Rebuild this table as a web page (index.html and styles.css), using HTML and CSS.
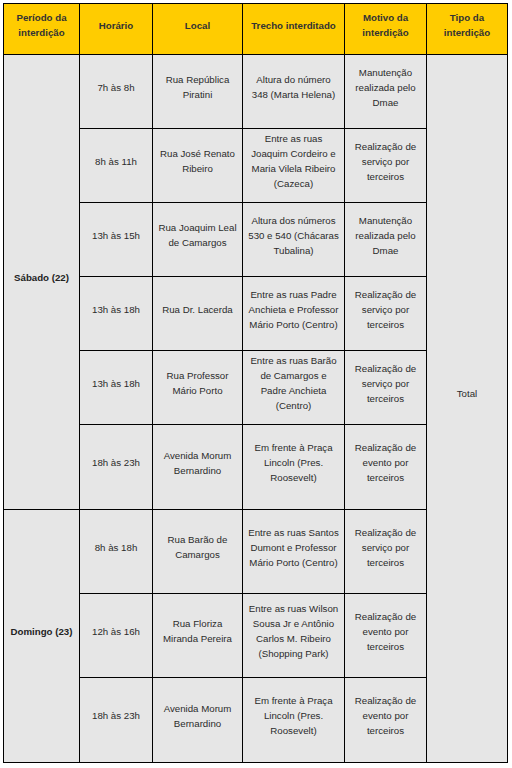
FILE: index.html
```html
<!DOCTYPE html>
<html lang="pt-BR">
<head>
<meta charset="utf-8">
<title>Interdições</title>
<link rel="stylesheet" href="styles.css">
</head>
<body>
<table class="schedule">
  <colgroup>
    <col class="c1"><col class="c2"><col class="c3"><col class="c4"><col class="c5"><col class="c6">
  </colgroup>
  <thead>
    <tr class="head">
      <th>Período da interdição</th>
      <th>Horário</th>
      <th>Local</th>
      <th>Trecho interditado</th>
      <th>Motivo da interdição</th>
      <th>Tipo da interdição</th>
    </tr>
  </thead>
  <tbody>
    <tr class="r74">
      <td class="day" rowspan="6">Sábado (22)</td>
      <td>7h às 8h</td>
      <td>Rua República Piratini</td>
      <td>Altura do número 348 (Marta Helena)</td>
      <td>Manutenção realizada pelo Dmae</td>
      <td class="total" rowspan="9">Total</td>
    </tr>
    <tr class="r74">
      <td>8h às 11h</td>
      <td>Rua José Renato Ribeiro</td>
      <td>Entre as ruas Joaquim Cordeiro e Maria Vilela Ribeiro (Cazeca)</td>
      <td>Realização de serviço por terceiros</td>
    </tr>
    <tr class="r74">
      <td>13h às 15h</td>
      <td>Rua Joaquim Leal de Camargos</td>
      <td>Altura dos números 530 e 540 (Chácaras Tubalina)</td>
      <td>Manutenção realizada pelo Dmae</td>
    </tr>
    <tr class="r74">
      <td>13h às 18h</td>
      <td>Rua Dr. Lacerda</td>
      <td>Entre as ruas Padre Anchieta e Professor Mário Porto (Centro)</td>
      <td>Realização de serviço por terceiros</td>
    </tr>
    <tr class="r74">
      <td>13h às 18h</td>
      <td>Rua Professor Mário Porto</td>
      <td>Entre as ruas Barão de Camargos e Padre Anchieta (Centro)</td>
      <td>Realização de serviço por terceiros</td>
    </tr>
    <tr class="r85">
      <td>18h às 23h</td>
      <td>Avenida Morum Bernardino</td>
      <td>Em frente à Praça Lincoln (Pres. Roosevelt)</td>
      <td>Realização de evento por terceiros</td>
    </tr>
    <tr class="r84">
      <td class="day" rowspan="3">Domingo (23)</td>
      <td>8h às 18h</td>
      <td>Rua Barão de Camargos</td>
      <td>Entre as ruas Santos Dumont e Professor Mário Porto (Centro)</td>
      <td>Realização de serviço por terceiros</td>
    </tr>
    <tr class="r84">
      <td>12h às 16h</td>
      <td>Rua Floriza Miranda Pereira</td>
      <td>Entre as ruas Wilson Sousa Jr e Antônio Carlos M. Ribeiro (Shopping Park)</td>
      <td>Realização de evento por terceiros</td>
    </tr>
    <tr class="r85">
      <td>18h às 23h</td>
      <td>Avenida Morum Bernardino</td>
      <td>Em frente à Praça Lincoln (Pres. Roosevelt)</td>
      <td>Realização de evento por terceiros</td>
    </tr>
  </tbody>
</table>
</body>
</html>
```

FILE: styles.css
```css
html, body {
  margin: 0;
  padding: 0;
  background: #ffffff;
}
body {
  padding: 3px;
  font-family: "Liberation Sans", Arial, sans-serif;
  font-size: 9.7px;
  line-height: 15px;
  color: #2b2b2b;
}
.schedule {
  border-collapse: collapse;
  table-layout: fixed;
  width: 504px;
}
.c1 { width: 76px; }
.c2 { width: 73px; }
.c3 { width: 90px; }
.c4 { width: 102px; }
.c5 { width: 82px; }
.c6 { width: 81px; }
.schedule th,
.schedule td {
  border: 1px solid #000000;
  text-align: center;
  vertical-align: middle;
  padding: 0 5px 9px;
  background: #e6e6e6;
}
.schedule th {
  background: #ffcc00;
  font-weight: bold;
  color: #333333;
  padding: 0 8px 8px;
}
.head { height: 51px; }
.r74 { height: 74px; }
.r84 { height: 84px; }
.r85 { height: 85px; }
.day {
  font-weight: bold;
  color: #222222;
}
.schedule td.total {
  padding-bottom: 30px;
}
```
